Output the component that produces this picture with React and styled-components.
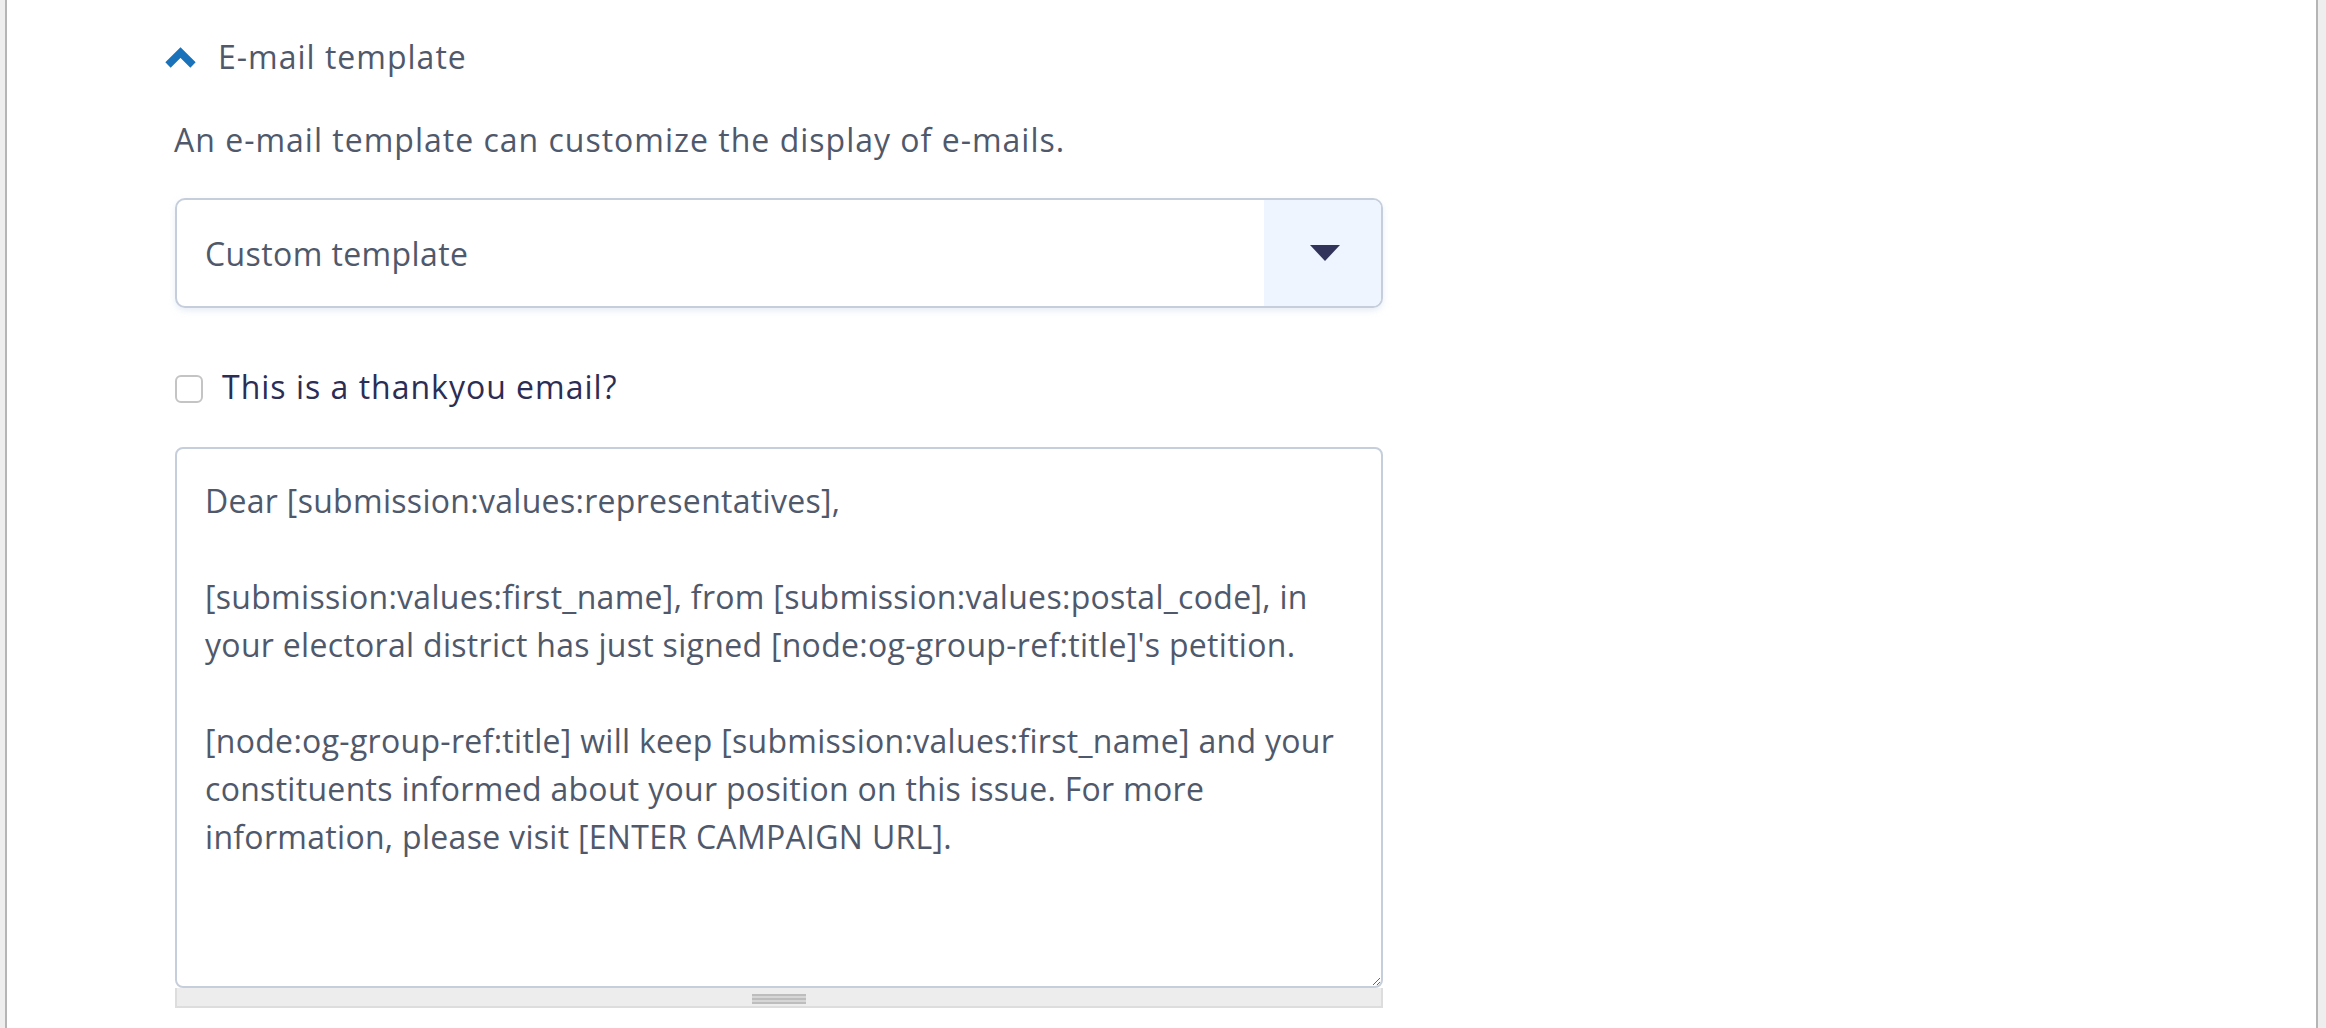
import React from "react";
import styled, { createGlobalStyle } from "styled-components";

const GlobalStyle = createGlobalStyle`
  html, body, #root { height: 100%; }
  body {
    margin: 0;
    background: #eeeeee;
    font-family: "Open Sans", Lato, "Liberation Sans", sans-serif;
  }
  * { box-sizing: border-box; }
`;

const Panel = styled.div`
  margin: 0 8px 0 5px;
  min-height: 100%;
  background: #ffffff;
  border-left: 2px solid #b5b5b5;
  border-right: 2px solid #b5b5b5;
  padding: 33px 0 0 168px;
`;

const Section = styled.section`
  width: 1208px;
  display: flex;
  flex-direction: column;
`;

const Heading = styled.h2`
  margin: 0 0 0 -10px;
  display: flex;
  align-items: center;
  gap: 22px;
  height: 48px;
  font-size: 32px;
  font-weight: 400;
  line-height: 48px;
  letter-spacing: 1px;
  color: #4f596b;
`;

const Description = styled.p`
  margin: 35px 0 0 -1px;
  font-size: 32px;
  line-height: 48px;
  letter-spacing: 1px;
  color: #4f596b;
`;

const SelectBox = styled.div`
  margin-top: 34px;
  height: 110px;
  display: flex;
  align-items: stretch;
  border: 2px solid #c6cedb;
  border-radius: 10px;
  background: #ffffff;
  box-shadow: 0 3px 6px rgba(190, 205, 230, 0.35);
  overflow: hidden;
`;

const SelectValue = styled.span`
  flex: 1;
  display: flex;
  align-items: center;
  padding-left: 28px;
  font-size: 32px;
  letter-spacing: 0.4px;
  color: #4f596b;
`;

const SelectButton = styled.span`
  width: 117px;
  display: flex;
  align-items: center;
  justify-content: center;
  background: #eef5fe;
`;

const Triangle = styled.span`
  width: 0;
  height: 0;
  border-left: 15px solid transparent;
  border-right: 15px solid transparent;
  border-top: 16px solid #32335a;
  margin-left: 4px;
`;

const CheckRow = styled.label`
  margin-top: 54px;
  display: flex;
  align-items: center;
  gap: 19px;
  height: 48px;
  font-size: 32px;
  letter-spacing: 1px;
  color: #2c2d54;
`;

const CheckBox = styled.span`
  width: 28px;
  height: 28px;
  border: 2px solid #c4c4c4;
  border-radius: 6px;
  background: #ffffff;
  margin-top: 6px;
  flex: none;
`;

const TextArea = styled.textarea`
  margin-top: 37px;
  display: block;
  width: 1208px;
  height: 541px;
  padding: 28px 28px;
  border: 2px solid #c6cedb;
  border-radius: 8px;
  font-family: "Open Sans", Lato, "Liberation Sans", sans-serif;
  font-size: 32px;
  line-height: 48px;
  letter-spacing: 0.3px;
  color: #4f596b;
  background: #ffffff;
  outline: none;
  resize: vertical;
  overflow: hidden;
  white-space: pre;
`;

const Grippie = styled.div`
  height: 20px;
  background: #ededed;
  border: 2px solid #dddddd;
  border-top: 0;
  display: flex;
  justify-content: center;
  padding-top: 6px;
`;

const GrippieMark = styled.span`
  width: 54px;
  height: 10px;
  background: repeating-linear-gradient(
    to bottom,
    #bdbdbd 0,
    #bdbdbd 2px,
    #d6d6d6 2px,
    #d6d6d6 4px
  );
`;

const Chevron = () => (
  <svg width="31" height="21" viewBox="0 0 31 21" aria-hidden="true">
    <path
      d="M3 18 L15.5 5.5 L28 18"
      fill="none"
      stroke="#1a72ba"
      strokeWidth="7.5"
      strokeLinejoin="miter"
      strokeLinecap="butt"
    />
  </svg>
);

const bodyText =
  "Dear [submission:values:representatives],\n\n" +
  "[submission:values:first_name], from [submission:values:postal_code], in\n" +
  "your electoral district has just signed [node:og-group-ref:title]'s petition.\n\n" +
  "[node:og-group-ref:title] will keep [submission:values:first_name] and your\n" +
  "constituents informed about your position on this issue. For more\n" +
  "information, please visit [ENTER CAMPAIGN URL].";

export default function App() {
  return (
    <>
      <GlobalStyle />
      <Panel>
        <Section>
          <Heading>
            <Chevron />
            E-mail template
          </Heading>
          <Description>
            An e-mail template can customize the display of e-mails.
          </Description>
          <SelectBox>
            <SelectValue>Custom template</SelectValue>
            <SelectButton>
              <Triangle />
            </SelectButton>
          </SelectBox>
          <CheckRow>
            <CheckBox />
            This is a thankyou email?
          </CheckRow>
          <div>
            <TextArea defaultValue={bodyText} spellCheck={false} wrap="off" />
            <Grippie>
              <GrippieMark />
            </Grippie>
          </div>
        </Section>
      </Panel>
    </>
  );
}
